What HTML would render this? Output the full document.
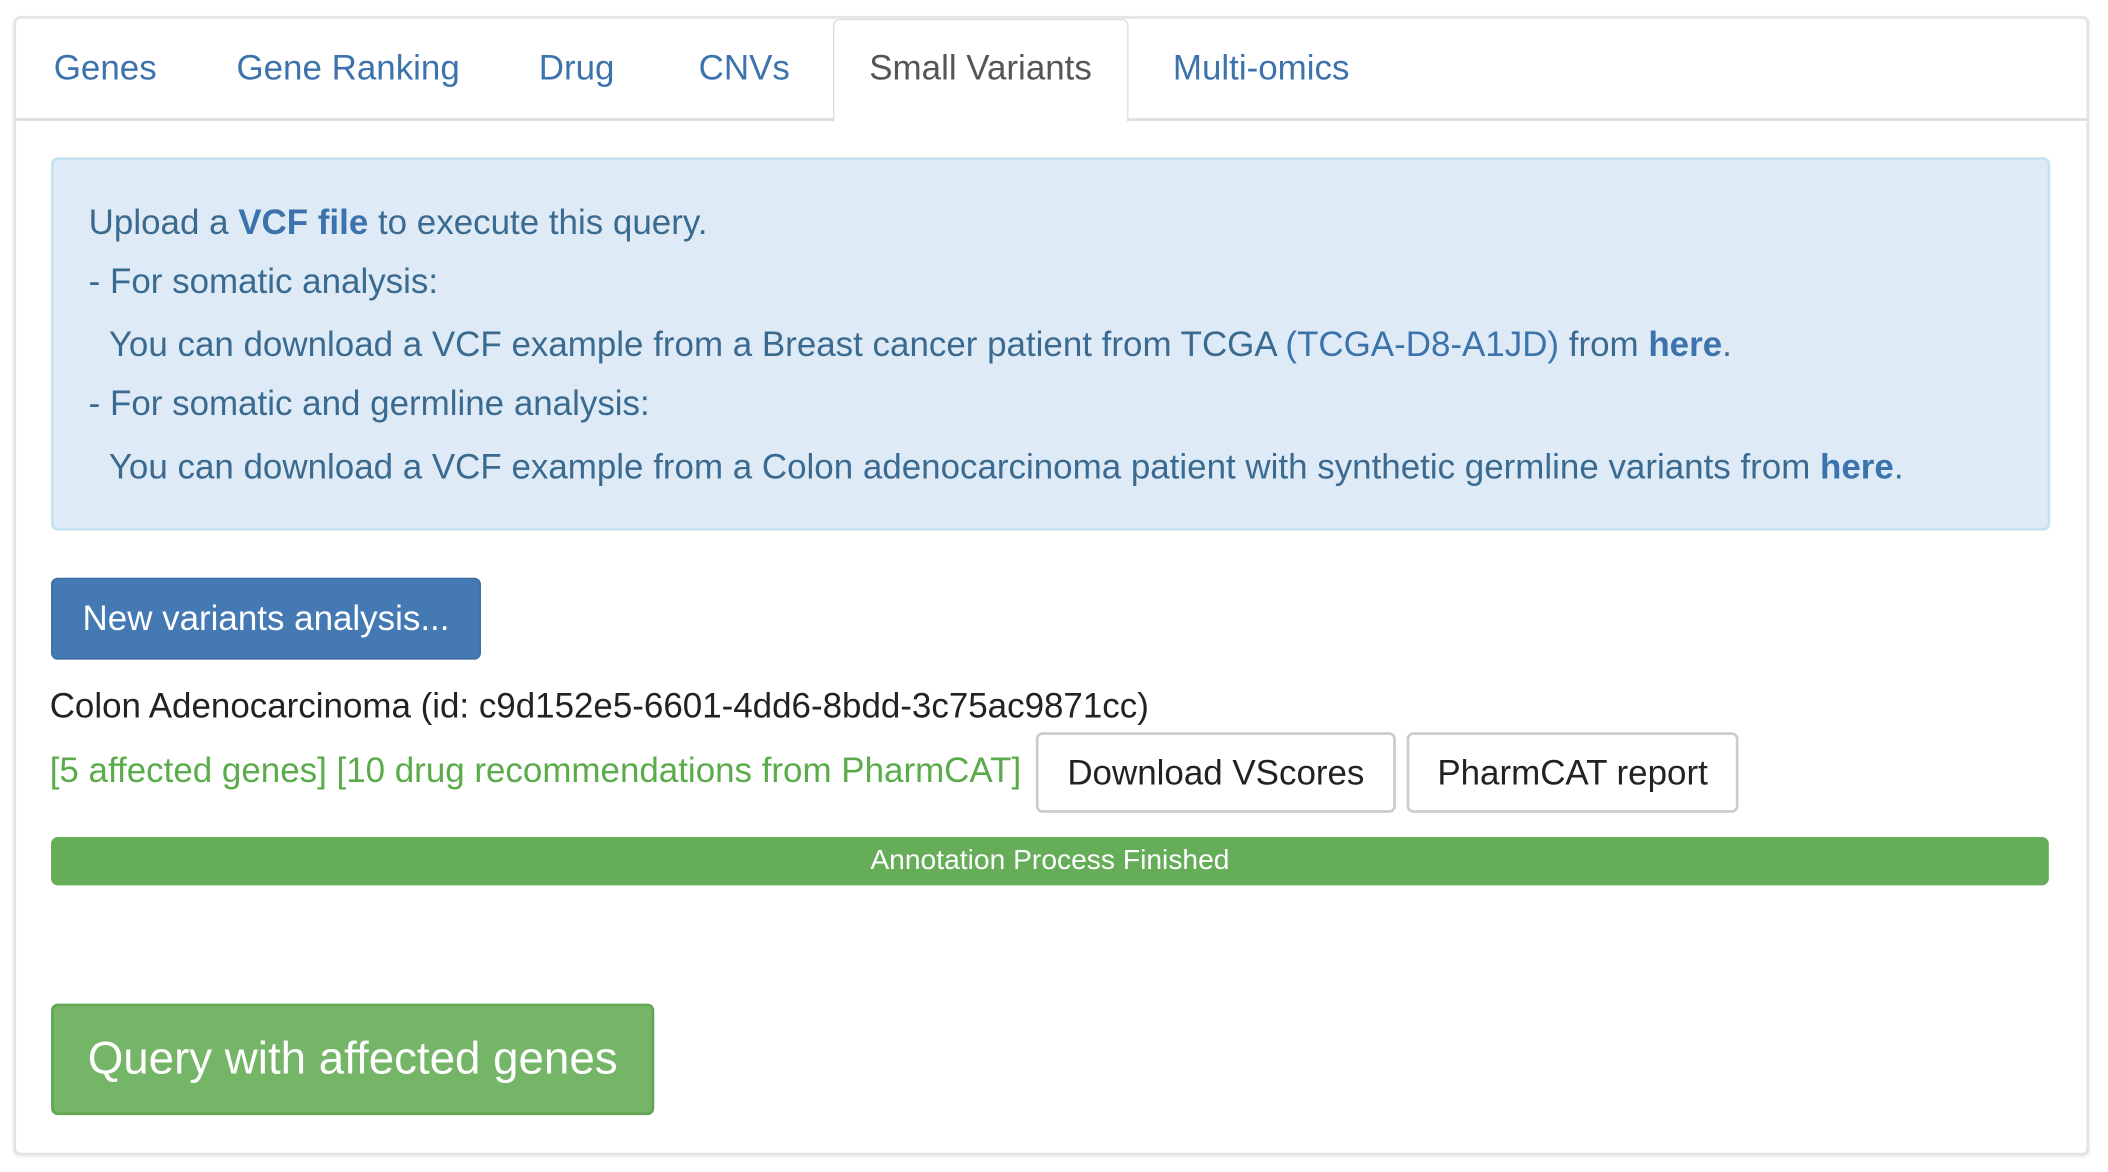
<!DOCTYPE html>
<html><head><meta charset="utf-8"><style>
html,body{margin:0;padding:0;background:#fff;width:2108px;height:1170px;overflow:hidden}
#w{position:absolute;left:0;top:0;width:1570px;height:872px;transform:scale(1.3435);transform-origin:0 0;font-family:"Liberation Sans",Arial,sans-serif;color:#333}
.a{position:absolute;white-space:nowrap}
.panel{left:10px;top:12px;width:1541px;height:844px;border:2px solid #e3e3e3;border-radius:5px;box-shadow:0 1px 2px rgba(0,0,0,.08)}
.tabline{left:12px;top:88px;width:1541px;height:2px;background:#ddd}
.tab{font-size:26px;color:#3d73ad;top:35px}
.active{left:620px;top:14px;width:218px;height:76px;background:#fff;border:1px solid #ddd;border-bottom:none;border-radius:5px 5px 0 0}
.alert{left:38px;top:117px;width:1484px;height:274px;background:#deebf6;border:2px solid #c4e3ee;border-radius:5px}
.al{font-size:26px;color:#3a6a8f}
.al b{color:#3d73ad}
.lk{color:#3d73ad}
.btn{border-radius:5px;font-size:26px;text-align:center;box-sizing:border-box}
</style></head><body><div id="w">
<div class="a panel"></div>
<div class="a tabline"></div>
<div class="a active"></div>
<div class="a tab" style="left:40px">Genes</div>
<div class="a tab" style="left:176px">Gene Ranking</div>
<div class="a tab" style="left:401px">Drug</div>
<div class="a tab" style="left:520px">CNVs</div>
<div class="a tab" style="left:647px;color:#555">Small Variants</div>
<div class="a tab" style="left:873px">Multi-omics</div>

<div class="a alert"></div>
<div class="a al" style="left:66px;top:150px">Upload a <b>VCF file</b> to execute this query.</div>
<div class="a al" style="left:66px;top:194px">- For somatic analysis:</div>
<div class="a al" style="left:81px;top:241px">You can download a VCF example from a Breast cancer patient from TCGA <span class="lk">(TCGA-D8-A1JD)</span> from <b>here</b>.</div>
<div class="a al" style="left:66px;top:285px">- For somatic and germline analysis:</div>
<div class="a al" style="left:81px;top:332px">You can download a VCF example from a Colon adenocarcinoma patient with synthetic germline variants from <b>here</b>.</div>

<div class="a btn" style="left:38px;top:430px;width:320px;height:61px;background:#4479b4;border:1px solid #3a6aa3;color:#fff;line-height:58px">New variants analysis...</div>
<div class="a" style="left:37px;top:510px;font-size:26px;color:#222">Colon Adenocarcinoma (id: c9d152e5-6601-4dd6-8bdd-3c75ac9871cc)</div>
<div class="a" style="left:37px;top:558px;font-size:26px;color:#5aab4a">[5 affected genes] [10 drug recommendations from PharmCAT]</div>
<div class="a btn" style="left:771px;top:545px;width:268px;height:60px;background:#fff;border:2px solid #ccc;color:#222;line-height:56px">Download VScores</div>
<div class="a btn" style="left:1047px;top:545px;width:247px;height:60px;background:#fff;border:2px solid #ccc;color:#222;line-height:56px">PharmCAT report</div>
<div class="a" style="left:38px;top:623px;width:1487px;height:36px;background:#66ad5a;border-radius:5px;color:#fff;font-size:21px;text-align:center;line-height:36px">Annotation Process Finished</div>
<div class="a btn" style="left:38px;top:747px;width:449px;height:83px;background:#74b567;border:2px solid #62a656;color:#fff;font-size:34px;line-height:79px">Query with affected genes</div>
</div></body></html>
